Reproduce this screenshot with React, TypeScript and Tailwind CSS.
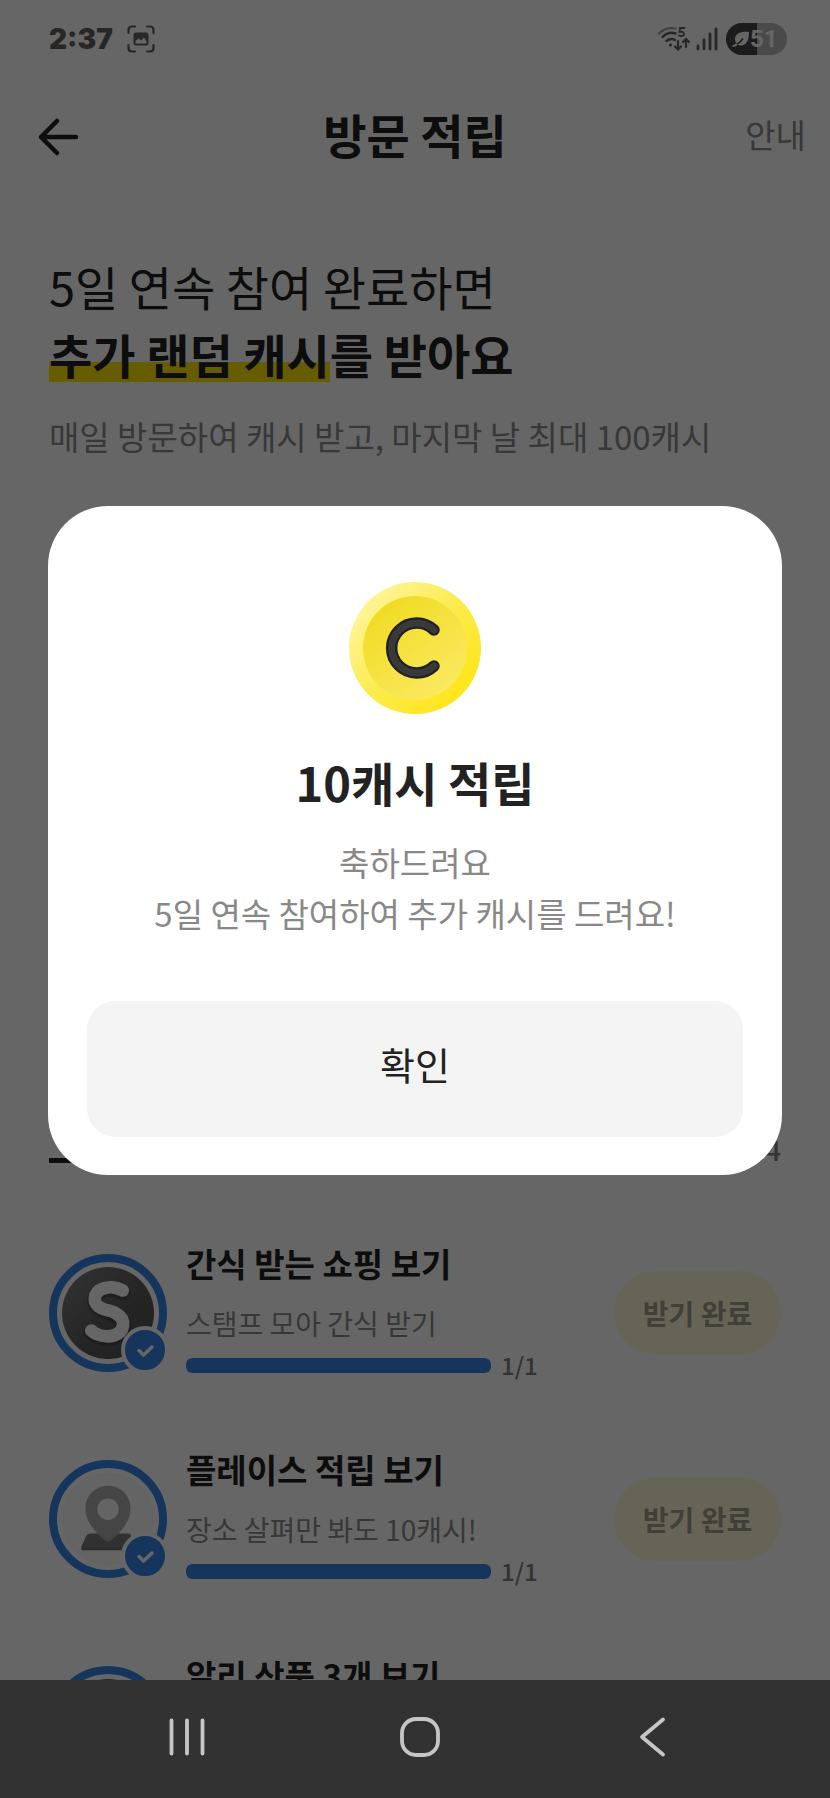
import type { ReactNode } from 'react'

const FONT = "font-['Noto_Sans_CJK_KR','Noto_Sans',sans-serif]"

type Mission = {
  title: string
  desc?: string
  done?: number
  total?: number
  icon: ReactNode
}

function ShoppingIcon() {
  return (
    <svg className="w-full h-full" viewBox="0 0 94 94" fill="none">
      <defs>
        <linearGradient id="shop-bg" x1="0" y1="0" x2="1" y2="1">
          <stop offset="0" stopColor="#808080" />
          <stop offset="0.6" stopColor="#5a5a5a" />
          <stop offset="1" stopColor="#505050" />
        </linearGradient>
      </defs>
      <circle cx="47" cy="47" r="47" fill="url(#shop-bg)" />
      <path d="M62 26C55 22 47 22 42 24C31 28 31 40 40 44C46 47 51 46 56 50C66 56 64 68 53 72C45 74 36 72 30 67"
        stroke="#3c3c3c" strokeOpacity="0.5" strokeWidth="16" strokeLinecap="round" />
      <path d="M62 24C55 20 47 20 42 22C31 26 31 38 40 42C46 45 51 44 56 48C66 54 64 66 53 70C45 72 36 70 30 65"
        stroke="#fff" strokeWidth="13" strokeLinecap="round" />
    </svg>
  )
}

function PlaceIcon() {
  return (
    <svg className="w-full h-full" viewBox="0 0 94 94" fill="none">
      <circle cx="47" cy="47" r="46" fill="#fbfbfb" stroke="#f7f7f7" strokeWidth="2" />
      <path d="M29 62H67Q70 62 71 65L74 75Q75 79 72 79H22Q19 79 20 75L25 64Q26 62 29 62Z" fill="#6b6b6b" />
      <path d="M29 62H67Q70 62 71 65L73 76H20L25 64Q26 62 29 62Z" fill="#7a7a7a" />
      <path fillRule="evenodd" clipRule="evenodd"
        d="M47 13C34 13 24 23 24 36C24 50 34 60 42 67.500Q47 72 52 67.500C60 60 70 50 70 36C70 23 60 13 47 13ZM47 26A11 11 0 1 1 47 48A11 11 0 1 1 47 26Z"
        fill="#adadad" />
    </svg>
  )
}

function DarkIcon() {
  return (
    <svg className="w-full h-full" viewBox="0 0 94 94">
      <circle cx="47" cy="47" r="47" fill="#636363" />
    </svg>
  )
}

const missions: Mission[] = [
  { title: '간식 받는 쇼핑 보기', desc: '스탬프 모아 간식 받기', done: 1, total: 1, icon: <ShoppingIcon /> },
  { title: '플레이스 적립 보기', desc: '장소 살펴만 봐도 10캐시!', done: 1, total: 1, icon: <PlaceIcon /> },
  { title: '알리 상품 3개 보기', icon: <DarkIcon /> },
]

function StatusBar() {
  return (
    <div className="flex items-center justify-between h-[78px] pl-[49px] pr-[43px] shrink-0">
      <div className="flex items-center gap-3.5">
        <span className="font-['Inter',sans-serif] text-[28px] leading-none font-black text-[#616161]">2:37</span>
        <svg className="w-7 h-7" viewBox="0 0 28 28" fill="none">
          <path d="M1.500 8V5Q1.500 1.500 5 1.500H8M20 1.500H23Q26.500 1.500 26.500 5V8M26.500 20V23Q26.500 26.500 23 26.500H20M8 26.500H5Q1.500 26.500 1.500 23V20"
            stroke="#616161" strokeWidth="2.200" strokeLinecap="round" />
          <rect x="6.500" y="7.500" width="15" height="13" rx="2.500" fill="#616161" />
          <path d="M8.500 18.500V16L11.500 13.500L14 15.500L17 12.500L19.500 16V18.500Z" fill="#fff" />
        </svg>
      </div>
      <div className="flex items-center gap-1.5">
        <svg className="w-8 h-7" viewBox="0 0 32 28" fill="none" strokeLinecap="round">
          <path d="M1 8.500Q8 1.500 17.500 3.500" stroke="#a0a0a0" strokeWidth="2.200" />
          <path d="M4.500 12Q10.500 6 17.500 8.500M8.500 16Q12.500 12.500 17 15" stroke="#616161" strokeWidth="2.400" />
          <circle cx="12.500" cy="20" r="1.600" fill="#616161" />
          <path d="M26.500 3H22L21.500 7Q26 6 26 9Q25.500 12 21 10.500" stroke="#616161" strokeWidth="1.800" />
          <path d="M20 16V24M17 21.500L20 24.500L23 21.500M28 22V14.500M25 17L28 14L31 17" stroke="#616161" strokeWidth="2.200" />
        </svg>
        <svg className="w-6 h-6" viewBox="0 0 24 24" stroke="#616161" strokeWidth="2.800" strokeLinecap="round">
          <path d="M2 22V19M8 22V13M14 22V7M20 22V2" />
        </svg>
        <div className="relative flex items-center h-8 w-[61px] rounded-full overflow-hidden bg-[#b9b9b9]">
          <div className="absolute inset-y-0 left-0 w-1/2 bg-[#464646]" />
          <div className="relative flex items-center pl-1.5">
            <svg className="w-[18px] h-[18px]" viewBox="0 0 18 18" fill="none">
              <path d="M17 2C10 1 3 3 3 9C3 12 4 14 6 15C13 17 17 12 17 2Z" fill="#fff" />
              <path d="M0.500 15.500Q6 15.500 11 8.500" stroke="#464646" strokeWidth="1.500" />
              <path d="M0.500 16Q3 16 5 14" stroke="#fff" strokeWidth="2" />
            </svg>
            <span className="font-['Roboto',sans-serif] text-2xl leading-8 font-bold text-white">51</span>
          </div>
        </div>
      </div>
    </div>
  )
}

function MissionRow({ title, desc, done, total, icon }: Mission) {
  return (
    <li className="flex items-start h-[206px]">
      <div className="relative w-[118px] h-[118px] mt-[11px] shrink-0 rounded-full border-8 border-[#3785e9] p-[5px]">
        {icon}
        <span className="absolute -right-2.5 -bottom-2.5 flex items-center justify-center w-12 h-12 rounded-full border-4 border-white bg-[#3785e9]">
          <svg className="w-5 h-5" viewBox="0 0 20 20" fill="none">
            <path d="M4 10.500L8.500 15L17 7" stroke="#fff" strokeWidth="3.500" strokeLinecap="round" strokeLinejoin="round" />
          </svg>
        </span>
      </div>
      <div className="flex-1 min-w-0 ml-[19px]">
        <h3 className="text-[33px] leading-10 font-bold text-[#222]">{title}</h3>
        {desc && <p className="mt-5 text-[28px] leading-10 text-[#8c8c8c]">{desc}</p>}
        {done !== undefined && total !== undefined && (
          <div className="flex items-center gap-2.5 mt-1">
            <div className="flex-1 max-w-[305px] h-[15px] rounded-md bg-gray-200 overflow-hidden">
              <div className="h-full rounded-md bg-[#3785e9]" style={{ width: `${(done / total) * 100}%` }} />
            </div>
            <span className="text-2xl leading-9 font-medium text-[#808080]">{done}/{total}</span>
          </div>
        )}
      </div>
      {desc && (
        <button className="shrink-0 w-[167px] h-[84px] mt-7 rounded-full bg-[#fff9d9] text-[28px] font-bold text-[#a09d8c]">
          받기 완료
        </button>
      )}
    </li>
  )
}

function RewardDialog() {
  return (
    <div className="absolute inset-0 flex items-center bg-black/60 px-12">
      <div role="dialog" aria-modal="true" aria-labelledby="reward-title"
        className="flex flex-col items-center w-full rounded-[60px] bg-white px-[39px] pt-[76px] pb-[38px] text-center">
        <svg className="w-[134px] h-[134px]" viewBox="0 0 134 134" fill="none">
          <defs>
            <linearGradient id="coin-rim" x1="0.100" y1="0.150" x2="0.850" y2="0.850">
              <stop offset="0" stopColor="#fff59a" />
              <stop offset="0.500" stopColor="#fbec50" />
              <stop offset="1" stopColor="#ffe51a" />
            </linearGradient>
            <linearGradient id="coin-face" x1="0.200" y1="0.100" x2="0.800" y2="0.900">
              <stop offset="0" stopColor="#f0dc25" />
              <stop offset="1" stopColor="#fbe95f" />
            </linearGradient>
          </defs>
          <circle cx="67" cy="66" r="66" fill="url(#coin-rim)" />
          <circle cx="67" cy="66" r="52" fill="url(#coin-face)" />
          <path d="M86 48A25 25 0 1 0 86 84" stroke="#222" strokeWidth="11.500" strokeLinecap="round" />
          <path d="M86 48A25 25 0 1 0 86 84" stroke="#39393b" strokeWidth="7" strokeLinecap="round" />
        </svg>
        <h2 id="reward-title" className="mt-8 text-[47px] leading-[68px] font-bold text-[#222]">10캐시 적립</h2>
        <p className="mt-[21px] text-[33px] leading-[51px] text-[#888]">
          축하드려요
          <br />
          5일 연속 참여하여 추가 캐시를 드려요!
        </p>
        <button className="w-full h-[136px] mt-[62px] pb-2.5 rounded-[28px] bg-[#f4f4f4] text-[38px] text-[#222]">확인</button>
      </div>
    </div>
  )
}

function NavBar() {
  return (
    <nav className="flex items-center justify-around h-[118px] pl-[70px] pr-[60px] pb-1 shrink-0 bg-[#323232] text-[#c6c6c6]">
      <button aria-label="최근 앱">
        <svg className="w-12 h-12" viewBox="0 0 48 48" stroke="currentColor" strokeWidth="3.800" strokeLinecap="round">
          <path d="M8.500 7.500V40.500M24 7.500V40.500M39.500 7.500V40.500" />
        </svg>
      </button>
      <button aria-label="홈">
        <svg className="w-12 h-12" viewBox="0 0 48 48" fill="none" stroke="currentColor" strokeWidth="3.800">
          <rect x="6" y="6" width="36" height="36" rx="14" />
        </svg>
      </button>
      <button aria-label="뒤로">
        <svg className="w-12 h-12" viewBox="0 0 48 48" fill="none" stroke="currentColor" strokeWidth="3.800" strokeLinecap="round" strokeLinejoin="round">
          <path d="M34 6.500L13 24L34 41.500" />
        </svg>
      </button>
    </nav>
  )
}

export default function App() {
  return (
    <div className={`flex flex-col h-screen bg-white ${FONT}`}>
      <div className="relative flex-1 min-h-0 overflow-hidden">
        <StatusBar />
        <header className="grid grid-cols-3 items-center h-[118px] px-6">
          <button aria-label="뒤로 가기" className="justify-self-start ml-3">
            <svg className="w-11 h-11" viewBox="0 0 44 44" fill="none">
              <path d="M21 6L5 22L21 38M5 22H40" stroke="#222" strokeWidth="4.500" strokeLinecap="round" strokeLinejoin="round" />
            </svg>
          </button>
          <h1 className="pb-1.5 text-center text-[47px] font-bold text-[#222] whitespace-nowrap">방문 적립</h1>
          <a href="#guide" className="justify-self-end pb-1 text-[33px] text-[#8c8c8c]">안내</a>
        </header>

        <section className="px-[49px] pt-14">
          <h2 className="text-[47px] leading-[68px] text-[#222]">
            5일 연속 참여 완료하면
            <br />
            <strong className="font-bold">
              <span className="bg-[linear-gradient(transparent_62%,#ffe600_62%,#ffe600_91%,transparent_91%)]">추가 랜덤 캐시</span>
              를 받아요
            </strong>
          </h2>
          <p className="mt-[23px] text-[33px] leading-[50px] text-[#8c8c8c]">
            매일 방문하여 캐시 받고, 마지막 날 최대 100캐시
          </p>
        </section>

        <section className="px-[49px] mt-[654px]">
          <div className="flex items-end justify-between h-12">
            <span className="w-40 h-[5px] bg-[#222]" />
            <span className="text-[28px] leading-7 font-medium text-[#808080]">4</span>
          </div>
          <ul className="mt-20">
            {missions.map((mission) => (
              <MissionRow key={mission.title} {...mission} />
            ))}
          </ul>
        </section>

        <RewardDialog />
      </div>
      <NavBar />
    </div>
  )
}
